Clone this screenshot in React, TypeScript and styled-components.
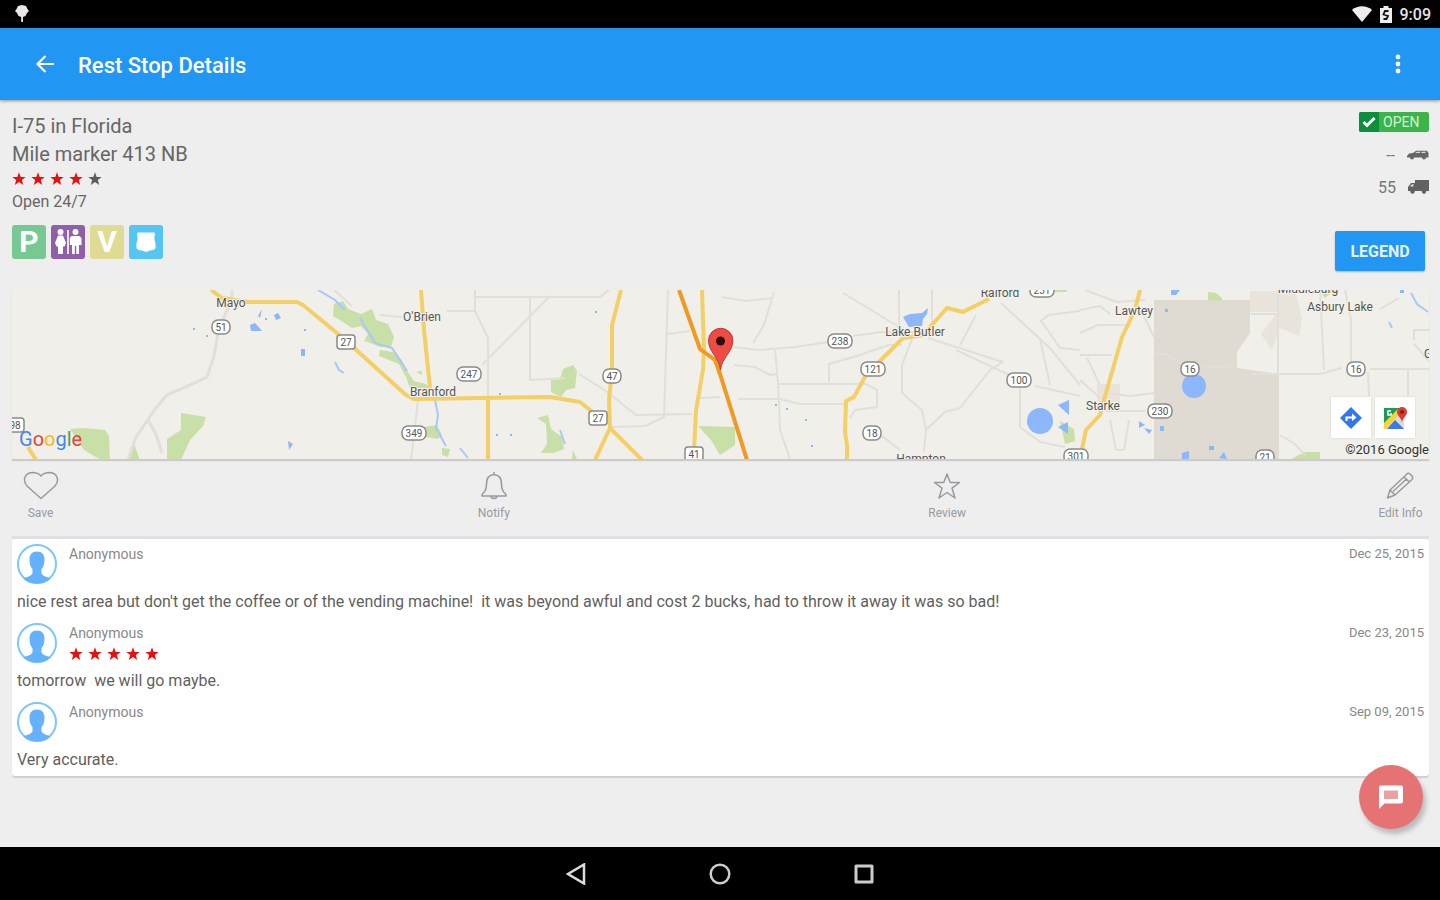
import React from "react";
import styled, { createGlobalStyle } from "styled-components";

const GlobalStyle = createGlobalStyle`
  *, *::before, *::after { box-sizing: border-box; }
  body { margin: 0; background: #000; }
  body, button { font-family: Roboto, "Liberation Sans", sans-serif; }
  button { margin: 0; padding: 0; border: 0; background: none; color: inherit; cursor: pointer; }
  h1, h2, p, ul { margin: 0; padding: 0; font-weight: 400; }
  ul { list-style: none; }
  svg { display: block; }
`;

const Screen = styled.div`
  display: flex;
  flex-direction: column;
  min-height: 100vh;
`;

const StatusBar = styled.div`
  display: flex;
  align-items: center;
  justify-content: space-between;
  height: 28px;
  padding: 0 9px 0 14px;
  background: #000;
  color: #e4e4e4;
`;

const StatusGroup = styled.div`
  display: flex;
  align-items: center;
  gap: 8px;
  font-size: 16px;
  font-weight: 500;
`;

const AppBar = styled.header`
  display: flex;
  align-items: center;
  height: 72px;
  padding: 0 30px 0 33px;
  background: #2196f3;
  color: #fff;
  box-shadow: 0 1px 3px rgba(0, 0, 0, 0.4);
  z-index: 1;
`;

const BarButton = styled.button`
  display: flex;
  align-items: center;
  justify-content: center;
  width: 24px;
  height: 40px;
`;

const Title = styled.h1`
  flex: 1;
  padding: 4px 0 0 21px;
  font-size: 22px;
  font-weight: 500;
  line-height: 28px;
`;

const Main = styled.main`
  position: relative;
  flex: 1;
  padding: 12px 11px 24px 12px;
  background: #eee;
  color: #666;
`;

const Summary = styled.section`
  display: flex;
  justify-content: space-between;
  height: 178px;
`;

const Place = styled.h2`
  font-size: 20px;
  line-height: 28px;
`;

const StarRow = styled.div`
  display: flex;
  gap: 5px;
  height: 22px;
  align-items: center;
`;

const Hours = styled.p`
  font-size: 16px;
  line-height: 24px;
`;

const Amenities = styled.ul`
  display: flex;
  gap: 5px;
  padding-top: 11px;
`;

const Amenity = styled.li<{ $color: string }>`
  display: flex;
  align-items: center;
  justify-content: center;
  width: 34px;
  height: 34px;
  border-radius: 3px;
  background: ${(p) => p.$color};
  color: #fff;
  font-size: 30px;
  font-weight: 700;
  line-height: 34px;
`;

const SideInfo = styled.div`
  display: flex;
  flex-direction: column;
  align-items: flex-end;
`;

const OpenBadge = styled.div`
  display: flex;
  width: 70px;
  height: 20px;
  border-radius: 2px;
  overflow: hidden;
  background: #3bb54a;
  color: #d9f3d5;
  font-size: 14px;
  line-height: 20px;
`;

const OpenTick = styled.span`
  display: flex;
  align-items: center;
  justify-content: center;
  width: 20px;
  margin-right: 4px;
  background: #0b8f3c;
`;

const CapacityList = styled.div`
  padding-top: 7px;
`;

const CapacityLine = styled.div`
  display: flex;
  align-items: center;
  justify-content: flex-end;
  gap: 12px;
  height: 32px;
  font-size: 16px;
  color: #777;
`;

const LegendButton = styled.button`
  width: 90px;
  height: 40px;
  margin: 28px 4px 0 0;
  border-radius: 2px;
  background: #2196f3;
  color: #e3f2fd;
  font-size: 16px;
  font-weight: 700;
  box-shadow: 0 1px 2px rgba(0, 0, 0, 0.25);
`;

const MapCard = styled.section`
  position: relative;
  height: 169px;
  overflow: hidden;
  background: #f0efea;
  box-shadow: 0 2px 1px #cdcbc9;
`;

const MapButtons = styled.div`
  position: absolute;
  right: 14px;
  bottom: 21px;
  display: flex;
  gap: 4px;
`;

const MapButton = styled.button`
  display: flex;
  align-items: center;
  justify-content: center;
  width: 40px;
  height: 41px;
  background: #fff;
  box-shadow: 0 0 2px rgba(0, 0, 0, 0.12);
`;

const MapLogo = styled.div`
  position: absolute;
  left: 7px;
  bottom: 8px;
  font-size: 20px;
  line-height: 24px;
`;

const LogoLetter = styled.span<{ $color: string }>`
  color: ${(p) => p.$color};
`;

const Copyright = styled.div`
  position: absolute;
  right: 0;
  bottom: 0;
  font-size: 13px;
  line-height: 18px;
  color: #333;
`;

const Actions = styled.nav`
  display: flex;
  justify-content: space-between;
  height: 80px;
  border-bottom: 3px solid #dfe0e2;
`;

const Action = styled.button`
  display: flex;
  flex-direction: column;
  align-items: center;
  gap: 5px;
  width: 57px;
  padding-top: 12px;
  color: #999a9d;
  font-size: 12px;
  line-height: 16px;
  white-space: nowrap;
`;

const Reviews = styled.ul`
  background: #fff;
  border-radius: 3px;
  box-shadow: 0 2px 1px #cfcfcf;
`;

const Review = styled.li`
  height: 79px;
  padding: 5px;
`;

const ReviewHead = styled.div`
  display: flex;
  gap: 12px;
  height: 48px;
  font-size: 14px;
  line-height: 20px;
  color: #888;
`;

const Author = styled.div`
  flex: 1;
`;

const ReviewDate = styled.time`
  font-size: 13px;
`;

const ReviewText = styled.p`
  font-size: 16px;
  line-height: 20px;
  color: #5f5f5f;
  white-space: pre-wrap;
`;

const Fab = styled.button`
  position: absolute;
  right: 17px;
  bottom: 18px;
  display: flex;
  align-items: center;
  justify-content: center;
  width: 64px;
  height: 64px;
  border-radius: 50%;
  background: #e57373;
  box-shadow: 3px 5px 5px rgba(0, 0, 0, 0.22);
`;

const SystemNav = styled.nav`
  display: flex;
  justify-content: center;
  gap: 112px;
  height: 53px;
  background: #000;
`;

const SystemButton = styled.button`
  display: flex;
  align-items: center;
  justify-content: center;
  width: 32px;
`;

function Star({ color }: { color: string }) {
  return (
    <svg width="14" height="14" viewBox="0 0 14 14">
      <path d="M7 .3 8.700 5H13.700L9.800 8 11.200 13 7 10.100 2.800 13 4.200 8 .3 5H5.300Z" fill={color} />
    </svg>
  );
}

function Stars({ filled, total = 5 }: { filled: number; total?: number }) {
  return (
    <StarRow role="img" aria-label={`${filled} of ${total} stars`}>
      {Array.from({ length: total }, (_, i) => (
        <Star key={i} color={i < filled ? "#e8100f" : "#5c5c5c"} />
      ))}
    </StarRow>
  );
}

function Avatar() {
  return (
    <svg width="40" height="40" viewBox="0 0 40 40">
      <circle cx="20" cy="20" r="19" fill="#fff" stroke="#7cc8fb" strokeWidth="2" />
      <path
        d="M20 7.500c-5 0-7.500 3-7.500 8 0 4.500 1.200 8 3 9.500v4c-.5 3-5 3.500-9 5.500C10 38 15 39.500 20 39.500S30 38 33.500 34.500c-4-2-8.500-2.500-9-5.500v-4c1.800-1.500 3-5 3-9.500C27.500 10.500 25 7.500 20 7.500Z"
        fill="#64b1fc"
      />
    </svg>
  );
}

type Shield = { x: number; y: number; label: string; us?: boolean };

const shields: Shield[] = [
  { x: 221, y: 327, label: "51" },
  { x: 346, y: 342, label: "27", us: true },
  { x: 469, y: 374, label: "247" },
  { x: 414, y: 433, label: "349" },
  { x: 612, y: 376, label: "47" },
  { x: 598, y: 418, label: "27", us: true },
  { x: 694, y: 454, label: "41", us: true },
  { x: 840, y: 341, label: "238" },
  { x: 873, y: 369, label: "121" },
  { x: 872, y: 433, label: "18" },
  { x: 1019, y: 380, label: "100" },
  { x: 1042, y: 290, label: "231" },
  { x: 1076, y: 456, label: "301" },
  { x: 1190, y: 369, label: "16" },
  { x: 1160, y: 411, label: "230" },
  { x: 1356, y: 369, label: "16" },
  { x: 1265, y: 457, label: "21" },
  { x: 15, y: 425, label: "98", us: true },
];

const towns = [
  { x: 231, y: 307, name: "Mayo" },
  { x: 422, y: 321, name: "O'Brien" },
  { x: 433, y: 396, name: "Branford" },
  { x: 915, y: 336, name: "Lake Butler" },
  { x: 1000, y: 297, name: "Raiford" },
  { x: 1134, y: 315, name: "Lawtey" },
  { x: 1103, y: 410, name: "Starke" },
  { x: 1340, y: 311, name: "Asbury Lake" },
  { x: 1308, y: 293, name: "Middleburg" },
  { x: 921, y: 463, name: "Hampton" },
];

function MapArt() {
  return (
    <svg
      width="100%"
      height="169"
      viewBox="12 290 1417 169"
      preserveAspectRatio="xMidYMid slice"
      role="img"
      aria-label="Map of the rest stop area"
    >
      <path d="M1155 300H1250V333L1237 352V368L1279 374V459H1154V300Z" fill="#dfdbd3" />
      <path d="M1250 291H1295L1302 318 1299 336 1280 328 1272 350 1261 334 1278 312H1250ZM1097 384H1120V405H1097Z" fill="#e8e4db" />
      <g fill="#c8dfa8">
        <path d="M70 429 84 428 105 430 109 436 110 460H101L84 450ZM181 413 206 417 203 426 190 440 181 460H167V439L181 430ZM134 444 140 460H129Z" />
        <path d="M334 304 343 301 348 309 361 314 372 309 376 320 388 324 394 337 391 347 380 347 373 344 364 341 368 334 361 326 352 328 343 322 333 316Z" />
        <path d="M380 350 393 352 401 359 407 371 414 381 426 384 430 389 410 388 406 377 399 364 379 356ZM416 372 422 371 422 375ZM424 427 437 425 442 435 438 439 426 437ZM442 448 450 449 448 457 442 455Z" />
        <path d="M551 380 560 379 563 369 573 365 577 371 575 388 566 390 561 397 551 392ZM537 418 548 415 551 429 562 437 564 449 553 453 541 453 547 444 546 424ZM573 450 577 459H572ZM698 426 735 427V445L720 455 711 440Z" />
        <path d="M1054 290H1067V292H1054ZM1208 292 1216 293 1222 298 1222 301 1208 300ZM1060 421 1074 429 1075 441 1065 444ZM1320 291 1335 290 1325 298ZM1291 459 1305 452H1320V460Z" />
      </g>
      <g fill="#8db7fb">
        <circle cx="1040" cy="421" r="13" />
        <circle cx="1194" cy="386" r="12" />
        <path d="M903 317 910 314 922 313 928 308 927 314 923 319 922 326 909 327ZM1058 405 1069 400V415ZM1058 427 1068 422V434ZM1171 290H1180L1176 295H1171ZM258 316 262 309 260 318ZM250 325 255 323 262 331 251 331ZM274 315 278 313 281 318 276 320ZM301 349H305V356H301ZM288 441 293 444 289 450ZM1182 453 1189 451V459H1182ZM1219 458 1224 452 1227 459ZM1209 446H1214V450H1209ZM1139 421 1145 425 1139 428ZM1144 428 1152 430 1149 434Z" />
        <path d="M242 301H244V303H242ZM206 335H208V337H206ZM193 328H195V330H193ZM265 318H267V320H265ZM304 329H306V331H304ZM499 393H501V395H499ZM595 311H597V313H595ZM496 434H498V436H496ZM510 434H512V436H510ZM786 408H788V410H786ZM811 445H813V447H811ZM805 419H807V421H805ZM775 404H777V406H775ZM1160 426H1164V431H1160ZM1165 309H1168V312H1165ZM1400 290H1404V293H1400Z" />
      </g>
      <path
        d="M318 290 335 300 345 310M360 318 375 343 392 348 398 357 407 371M435 400 438 415 436 428 446 446M460 448 468 458M335 362 339 370 344 373M560 430 565 444M1411 293 1417 304 1428 312M1389 322 1392 328"
        fill="none"
        stroke="#a9c8f8"
        strokeWidth="2"
      />
      <g fill="none" stroke="#e1dfda" strokeWidth="2" strokeLinejoin="round">
        <path d="M218 333 214 356 207 377 190 385 167 395 155 409 147 421 136 437 128 460M148 420 156 434 162 453M222 321 232 300 232 290" strokeWidth="3" />
        <path d="M418 400 415 427 411 459M334 290 352 306M380 315 402 317M447 311 475 311 475 290M475 297H600L609 290M475 311 488 338V460M550 296 482 365M530 297V380L565 378M579 374 606 391 636 415 692 414M612 427 645 426 664 417 668 290M667 334 690 331M700 398 720 397" />
        <path d="M722 297 745 301 773 298M774 292 764 325 753 343M734 347 758 350 795 347 828 342M853 336 881 332H940M775 350 778 382 780 430 790 459M734 365 755 367 770 375 776 374M829 382V364L860 355 889 345H902M778 384H866L877 390V407L855 410 850 418M738 399 780 399 800 404H846M843 293 899 327V290M932 290V325M912 339 902 365V393L922 410 926 430 924 452M926 430 945 412 960 408 990 370 1003 362 928 338M956 350 1020 380M1001 303 1050 348 1080 385M1040 338 1050 385M976 315 960 345M1020 380V427L1040 442 1065 447M882 436 900 450M1035 386 1080 396M1040 322 1048 315 1080 311M1042 322 1060 348 1080 350" />
        <path d="M1080 310 1100 306 1110 314M1080 333 1098 325 1130 325M1080 355H1112M1085 290 1117 302 1145 300M1080 380 1100 398M1087 358 1100 385M1140 308 1154 337M1155 354 1167 354 1181 364M1202 368 1235 366M1251 374H1320L1342 368M1370 369H1429M1278 290V374M1251 314H1279M1320 290 1324 370M1345 290 1351 320V368M1105 393 1130 396 1155 393M1105 411H1145M1110 420 1116 450H1124L1129 420M1368 372 1369 396M1408 370V396M1414 340V330H1429M1280 435 1295 444 1305 455M1380 309 1399 298M1414 344 1429 361" />
      </g>
      <g fill="none" stroke="#f3cf65" strokeWidth="4" strokeLinejoin="round">
        <path d="M211 290 222 298 248 302H297L303 305 343 338 406 395 414 399 480 398 550 397 580 402 600 418M421 290 424 330 430 388M488 399V460M621 290 612 325V370L609 400 610 428 595 460M610 428 642 460M702 290 704 350 703 370 696 410 694 450M28 447 36 460" />
        <path d="M989 299 963 312 947 308 931 326 924 335 903 338 880 361 866 375 854 397 846 401 845 432 847 445V460M1140 290 1135 310 1122 337 1104 400 1100 415 1086 430 1082 449" />
      </g>
      <path d="M679 290 700 349 715 360 720 374 747 460" fill="none" stroke="#f09a24" strokeWidth="4" />
      {shields.map((s, i) => {
        const w = s.label.length > 2 ? 24 : 18;
        return (
          <g key={i}>
            <rect x={s.x - w / 2} y={s.y - 7} width={w} height="14" rx={s.us ? 3 : 6} fill="#fff" stroke="#8a8a8a" strokeWidth="1.500" />
            <text x={s.x} y={s.y + 4} textAnchor="middle" fontSize="10" fill="#555">
              {s.label}
            </text>
          </g>
        );
      })}
      {towns.map((t) => (
        <text
          key={t.name}
          x={t.x}
          y={t.y}
          textAnchor="middle"
          fontSize="12"
          fill="#555"
          stroke="#f4f3ee"
          strokeWidth="2"
          paintOrder="stroke"
        >
          {t.name}
        </text>
      ))}
      <text x="1424" y="358" fontSize="12" fill="#555">G</text>
      <path d="M720.500 370C719 357 708.500 352 708.500 340.500a12.200 12.200 0 0 1 24.400 0C733 352 722 357 720.500 370Z" fill="#ee4b44" stroke="#b93a34" />
      <circle cx="720.500" cy="341" r="4.500" fill="#2c0b0a" />
    </svg>
  );
}

const logo: [string, string][] = [
  ["G", "#4285f4"],
  ["o", "#ea4335"],
  ["o", "#fbbc05"],
  ["g", "#4285f4"],
  ["l", "#34a853"],
  ["e", "#ea4335"],
];

const reviews = [
  {
    date: "Dec 25, 2015",
    stars: 0,
    text: "nice rest area but don't get the coffee or of the vending machine!  it was beyond awful and cost 2 bucks, had to throw it away it was so bad!",
  },
  { date: "Dec 23, 2015", stars: 5, text: "tomorrow  we will go maybe." },
  { date: "Sep 09, 2015", stars: 0, text: "Very accurate." },
];

const outline = { fill: "none", stroke: "currentColor", strokeWidth: 1.5, strokeLinejoin: "round" as const };

export default function App() {
  return (
    <Screen>
      <GlobalStyle />
      <StatusBar>
        <svg width="16" height="18" viewBox="0 0 16 18">
          <path d="M4 1 8 0l4 1 1.500 3L15 6l-2 2-1.500 3L9 12v5H7.200v-5L4.500 11 3 8 1 6l1.500-2Z" fill="#e8e8e8" />
        </svg>
        <StatusGroup>
          <svg width="20" height="16" viewBox="0 0 20 16">
            <path d="M0 4C5.500-1 14.500-1 20 4L10 16Z" fill="#eee" />
          </svg>
          <svg width="12" height="17" viewBox="0 0 12 17">
            <path d="M3.500 0h5v2H12v15H0V2h3.500Z" fill="#eee" />
            <path d="M8.500 5H5L3.500 8.500 8 10 6.500 13H3.500" fill="none" stroke="#111" strokeWidth="1.800" />
          </svg>
          <span>9:09</span>
        </StatusGroup>
      </StatusBar>

      <AppBar>
        <BarButton aria-label="Back">
          <svg width="20" height="20" viewBox="0 0 20 20" fill="none" stroke="#fff" strokeWidth="2.200">
            <path d="M19 10H3M10.500 2 2.500 10l8 8" />
          </svg>
        </BarButton>
        <Title>Rest Stop Details</Title>
        <BarButton aria-label="More options">
          <svg width="6" height="20" viewBox="0 0 6 20" fill="#fff">
            <circle cx="3" cy="3" r="2.400" />
            <circle cx="3" cy="10" r="2.400" />
            <circle cx="3" cy="17" r="2.400" />
          </svg>
        </BarButton>
      </AppBar>

      <Main>
        <Summary>
          <div>
            <Place>I-75 in Florida</Place>
            <Place as="p">Mile marker 413 NB</Place>
            <Stars filled={4} />
            <Hours>Open 24/7</Hours>
            <Amenities>
              <Amenity $color="#77c893" aria-label="Parking">P</Amenity>
              <Amenity $color="#8f5fa8" aria-label="Restrooms">
                <svg width="30" height="28" viewBox="0 0 30 28" fill="#fff">
                  <circle cx="7.500" cy="4" r="3" />
                  <path d="M5 7.500H10L13 15 11.500 18.500H10V26H5V18.500H3.500L2 15ZM14.200 2H15.800V26H14.200Z" />
                  <circle cx="22.500" cy="4" r="3" />
                  <path d="M18.500 8H26.500L28.500 10V17H26V26H23.200V18H21.800V26H19V17H16.800V10Z" />
                </svg>
              </Amenity>
              <Amenity $color="#dfda94" aria-label="Vending">V</Amenity>
              <Amenity $color="#55c5f1" aria-label="Security">
                <svg width="22" height="22" viewBox="0 0 22 22">
                  <path d="M2.500 1.500H19.500L20 4Q18.500 7 20.500 12V17Q20 19 15 19.500L11 21 7 19.500Q2 19 1.500 17V12Q3.500 7 2 4Z" fill="#fff" />
                </svg>
              </Amenity>
            </Amenities>
          </div>
          <SideInfo>
            <OpenBadge>
              <OpenTick>
                <svg width="14" height="12" viewBox="0 0 14 12" fill="none" stroke="#fff" strokeWidth="3">
                  <path d="M1.500 6 5 9.500 12.500 2" />
                </svg>
              </OpenTick>
              OPEN
            </OpenBadge>
            <CapacityList>
              <CapacityLine>
                <span>--</span>
                <svg width="22" height="10" viewBox="0 0 22 10" fill="#666">
                  <path d="M0 6 2 3.500 6 3 9 .8H20L21.500 3V7.500H0Z" />
                  <path d="M8 3 10 1.800H13V3ZM14.500 1.800H18.500V3H14.500Z" fill="#ddd" />
                  <circle cx="5" cy="7.500" r="2" />
                  <circle cx="17" cy="7.500" r="2" />
                </svg>
              </CapacityLine>
              <CapacityLine>
                <span>55</span>
                <svg width="21" height="14" viewBox="0 0 21 14" fill="#626262">
                  <path d="M7 0H21V11H7ZM0 11V7L3 3H7V11Z" />
                  <path d="M2 6.500 3.800 4.300H5.500V6.500Z" fill="#ddd" />
                  <circle cx="4.500" cy="11.500" r="2.200" />
                  <circle cx="16" cy="11.500" r="2.200" />
                </svg>
              </CapacityLine>
            </CapacityList>
            <LegendButton>LEGEND</LegendButton>
          </SideInfo>
        </Summary>

        <MapCard>
          <MapArt />
          <MapLogo>
            {logo.map(([letter, color], i) => (
              <LogoLetter key={i} $color={color}>{letter}</LogoLetter>
            ))}
          </MapLogo>
          <MapButtons>
            <MapButton aria-label="Directions">
              <svg width="24" height="24" viewBox="0 0 24 24">
                <path d="M12 1 23 12 12 23 1 12Z" fill="#3277ee" />
                <path d="M7.500 15V11.500H14" fill="none" stroke="#fff" strokeWidth="2" />
                <path d="M13 7.500 17.500 11.500 13 15Z" fill="#fff" />
              </svg>
            </MapButton>
            <MapButton aria-label="Open in Maps">
              <svg width="26" height="26" viewBox="0 0 26 26">
                <path d="M2 3H22V24H2Z" fill="#d9dcdf" />
                <path d="M2 3H18L2 20Z" fill="#1d9a54" />
                <path d="M2 18 16 4 19 7 4 24H2Z" fill="#fbd334" />
                <path d="M5 24 13 15 22 24Z" fill="#3c78e8" />
                <path d="M9 6H6V10H9V8" fill="none" stroke="#fff" strokeWidth="1.500" />
                <path d="M20 18C20 13 15 11 15 7a5 5 0 0 1 10 0C25 11 20 13 20 18Z" fill="#df3a30" />
                <circle cx="20" cy="7" r="2" fill="#84201b" />
              </svg>
            </MapButton>
          </MapButtons>
          <Copyright>©2016 Google</Copyright>
        </MapCard>

        <Actions>
          <Action>
            <svg width="36" height="29" viewBox="0 0 36 29" {...outline}>
              <path d="M18 27.500 4 15C-1 9 2 2 9 1.500c4 0 7 .8 9 3.500 2-2.700 5-3.500 9-3.500 7 .5 10 7.500 5 13.500Z" />
            </svg>
            Save
          </Action>
          <Action>
            <svg width="28" height="29" viewBox="0 0 28 29" {...outline}>
              <path d="M14 1V3.500C8 4 6.500 8 6.500 13c0 6-2 8-4.500 10.500V25H26V23.500C23.500 21 21.500 19 21.500 13c0-5-1.500-9-7.500-9.500M11 25.500c.5 2.500 5.500 2.500 6 0" />
            </svg>
            Notify
          </Action>
          <Action>
            <svg width="28" height="29" viewBox="0 0 28 29" {...outline}>
              <path d="M14 3 17.200 11.500H26.500L19 17.200 22 27 14 21.500 6 27 9 17.200 1.500 11.500H10.800Z" />
            </svg>
            Review
          </Action>
          <Action>
            <svg width="28" height="29" viewBox="0 0 28 29" {...outline}>
              <path d="M1.500 27 4 19 20.500 3.500Q22 1.500 24 3L26 5Q27.500 7 26 8.500L9 24ZM4 19 9 24M18 6 23.500 11M7 20.500 20.500 8" />
            </svg>
            Edit Info
          </Action>
        </Actions>

        <Reviews>
          {reviews.map((r) => (
            <Review key={r.date}>
              <ReviewHead>
                <Avatar />
                <Author>
                  Anonymous
                  {r.stars > 0 && <Stars filled={r.stars} />}
                </Author>
                <ReviewDate>{r.date}</ReviewDate>
              </ReviewHead>
              <ReviewText>{r.text}</ReviewText>
            </Review>
          ))}
        </Reviews>

        <Fab aria-label="Add comment">
          <svg width="26" height="26" viewBox="0 0 26 26">
            <path d="M3 1.500H23Q25 1.500 25 3.500V17.500Q25 19.500 23 19.500H6.500L1 25V3.500Q1 1.500 3 1.500Z" fill="#fff" />
            <path d="M6 6.500H20V15H6Z" fill="#eda0a0" />
          </svg>
        </Fab>
      </Main>

      <SystemNav>
        <SystemButton aria-label="Back">
          <svg width="20" height="22" viewBox="0 0 20 22">
            <path d="M18 1.500V20.500L2 11Z" fill="none" stroke="#ddd" strokeWidth="2.500" />
          </svg>
        </SystemButton>
        <SystemButton aria-label="Home">
          <svg width="22" height="22" viewBox="0 0 22 22">
            <circle cx="11" cy="11" r="9.300" fill="none" stroke="#ccc" strokeWidth="2.500" />
          </svg>
        </SystemButton>
        <SystemButton aria-label="Recent apps">
          <svg width="20" height="20" viewBox="0 0 20 20">
            <path d="M2 2H18V18H2Z" fill="none" stroke="#ccc" strokeWidth="3" strokeLinejoin="round" />
          </svg>
        </SystemButton>
      </SystemNav>
    </Screen>
  );
}
